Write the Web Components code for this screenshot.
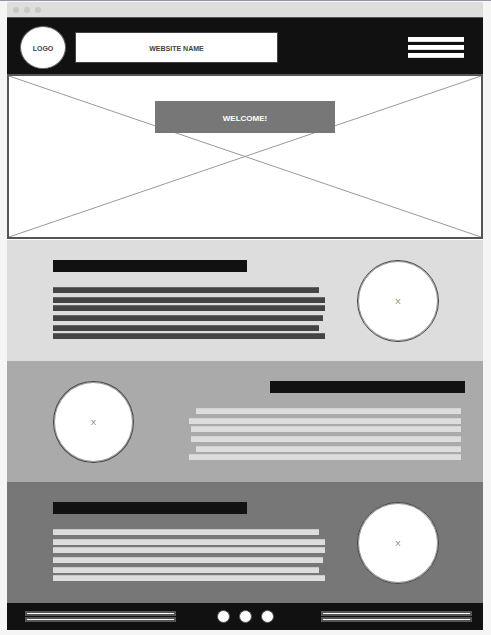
<!DOCTYPE html>
<html lang="en">
<head>
<meta charset="utf-8">
<title>Website wireframe</title>
<style>
  body { margin: 0; background: #f5f5f5; font-family: "Liberation Sans", Arial, sans-serif; color: #444; }
</style>
</head>
<body>
<wire-page>
  <wire-titlebar></wire-titlebar>
  <wire-header></wire-header>
  <wire-hero>WELCOME!</wire-hero>
  <wire-section tone="light">X</wire-section>
  <wire-section tone="medium" flip>X</wire-section>
  <wire-section tone="dark">X</wire-section>
  <wire-footer></wire-footer>
</wire-page>
<script>
  function define(name, markup) {
    const template = document.createElement('template');
    template.innerHTML = '<style>*{box-sizing:border-box}</style>' + markup;
    customElements.define(name, class extends HTMLElement {
      constructor() {
        super();
        this.attachShadow({ mode: 'open' }).append(template.content.cloneNode(true));
      }
    });
  }

  define('wire-page', `
    <style>
      :host { display: block; border-top: 1px solid #97969e; padding: 1px 8px 5px 7px; }
      main { display: flex; flex-direction: column; }
    </style>
    <main><slot></slot></main>`);

  define('wire-titlebar', `
    <style>
      :host { display: flex; align-items: center; gap: 5px; height: 15px; padding-left: 6px;
              box-sizing: border-box; background: #ddd; border-radius: 2px 2px 0 0; }
      i { width: 6px; height: 6px; border-radius: 50%; background: #c8c8c8; }
    </style>
    <i></i><i></i><i></i>`);

  define('wire-header', `
    <style>
      :host { display: block; background: #111; border-top: 1px solid #555; }
      header { display: flex; align-items: center; padding: 8px 19px 5px 13px; font-size: 7px; font-weight: bold; }
      a { color: inherit; text-decoration: none; }
      .logo { display: grid; place-items: center; width: 46px; height: 43px; padding-top: 2px; border: 1px solid #666;
              border-radius: 50%; background: #fff; }
      h1 { flex: 0 1 203px; display: grid; place-items: center; height: 31px; margin: 0 auto 0 9px; padding-top: 2px;
           font: inherit; background: #fff; border: 1px solid #444; }
      button { display: flex; flex-direction: column; gap: 3px; width: 56px; padding: 0;
               border: 0; background: none; }
      button i { height: 5px; width: 100%; background: #fff; border-bottom: 1px solid #ddd; }
    </style>
    <header>
      <a class="logo" href="#">LOGO</a>
      <h1>WEBSITE NAME</h1>
      <button type="button" aria-label="Menu"><i></i><i></i><i></i></button>
    </header>`);

  define('wire-hero', `
    <style>
      :host { display: grid; height: 165px; box-sizing: border-box; border: 2px solid #555; background: #fff;
              margin-bottom: 1px; box-shadow: 0 1px #fff; }
      svg { grid-area: 1 / 1; width: 100%; height: 161px; }
      h2 { grid-area: 1 / 1; justify-self: center; display: grid; place-items: center; width: 38%; height: 32px;
           margin: 25px 0 0; padding-top: 3px; background: #777; color: #fff; font-size: 8px; z-index: 1; }
    </style>
    <svg aria-hidden="true" viewBox="0 0 100 100" preserveAspectRatio="none">
      <path d="M0 0L100 100M0 100L100 0" fill="none" stroke="#999" stroke-width="1" vector-effect="non-scaling-stroke"/>
    </svg>
    <h2><slot></slot></h2>`);

  define('wire-section', `
    <style>
      :host { display: flex; gap: 32px; height: 121px; box-sizing: border-box; padding: 20px 44px 0 46px;
              background: var(--back); --line: #ddd; --edge: #c8c8c8; }
      :host([tone="light"]) { --back: #ddd; --line: #444; --edge: #666; }
      :host([tone="medium"]) { --back: #aaa; --edge: #d2d2d2; }
      :host([tone="dark"]) { --back: #777; }
      .copy { flex: 1; display: flex; flex-direction: column; align-items: flex-start; }
      .title { width: 194px; height: 12px; background: #111; margin-bottom: 15px; }
      .line { width: calc(100% - var(--short, 0px)); height: 6px; margin-bottom: 4px;
              background: var(--line); border-top: 1px solid var(--edge); }
      .tight { margin-bottom: 2px; }
      .a { --short: 6px; }
      .b { --short: 2px; }
      .pic { flex: none; display: grid; place-items: center; width: 82px; height: 82px;
             border: 1px solid #444; box-shadow: inset 0 0 0 1px #999;
             border-radius: 50%; background: #fff; font-size: 8px; color: #777; }
      :host([flip]) { flex-direction: row-reverse; gap: 55px; padding-right: 18px; }
      :host([flip]) .pic { width: 81px; }
      :host([flip]) .copy { align-items: flex-end; }
      :host([flip]) .title { width: 195px; }
      :host([flip]) .line { width: calc(100% - 4px - var(--short, 0px)); margin-right: 4px; }
      :host([flip]) .c { --short: 2px; }
      :host([flip]) .a { --short: 7px; }
    </style>
    <div class="copy">
      <div class="title"></div>
      <div class="line a"></div>
      <div class="line tight"></div>
      <div class="line c"></div>
      <div class="line b"></div>
      <div class="line a tight"></div>
      <div class="line"></div>
    </div>
    <div class="pic"><span><slot></slot></span></div>`);

  define('wire-footer', `
    <style>
      :host { display: block; background: #111; }
      footer { display: flex; align-items: center; height: 27px; padding: 0 11px 0 18px; }
      .rows { display: grid; gap: 1px; width: 151px; }
      .rows i { height: 5px; border: 2px solid #555; background: #fff; }
      .dots { display: flex; gap: 9px; margin: 0 auto; padding-right: 6px; }
      a { width: 13px; height: 13px; border: 1px solid #555; border-radius: 50%; background: #fff; }
    </style>
    <footer>
      <div class="rows"><i></i><i></i></div>
      <nav class="dots" aria-label="Social">
        <a href="#" aria-label="First profile"></a><a href="#" aria-label="Second profile"></a><a href="#" aria-label="Third profile"></a>
      </nav>
      <div class="rows"><i></i><i></i></div>
    </footer>`);
</script>
</body>
</html>
